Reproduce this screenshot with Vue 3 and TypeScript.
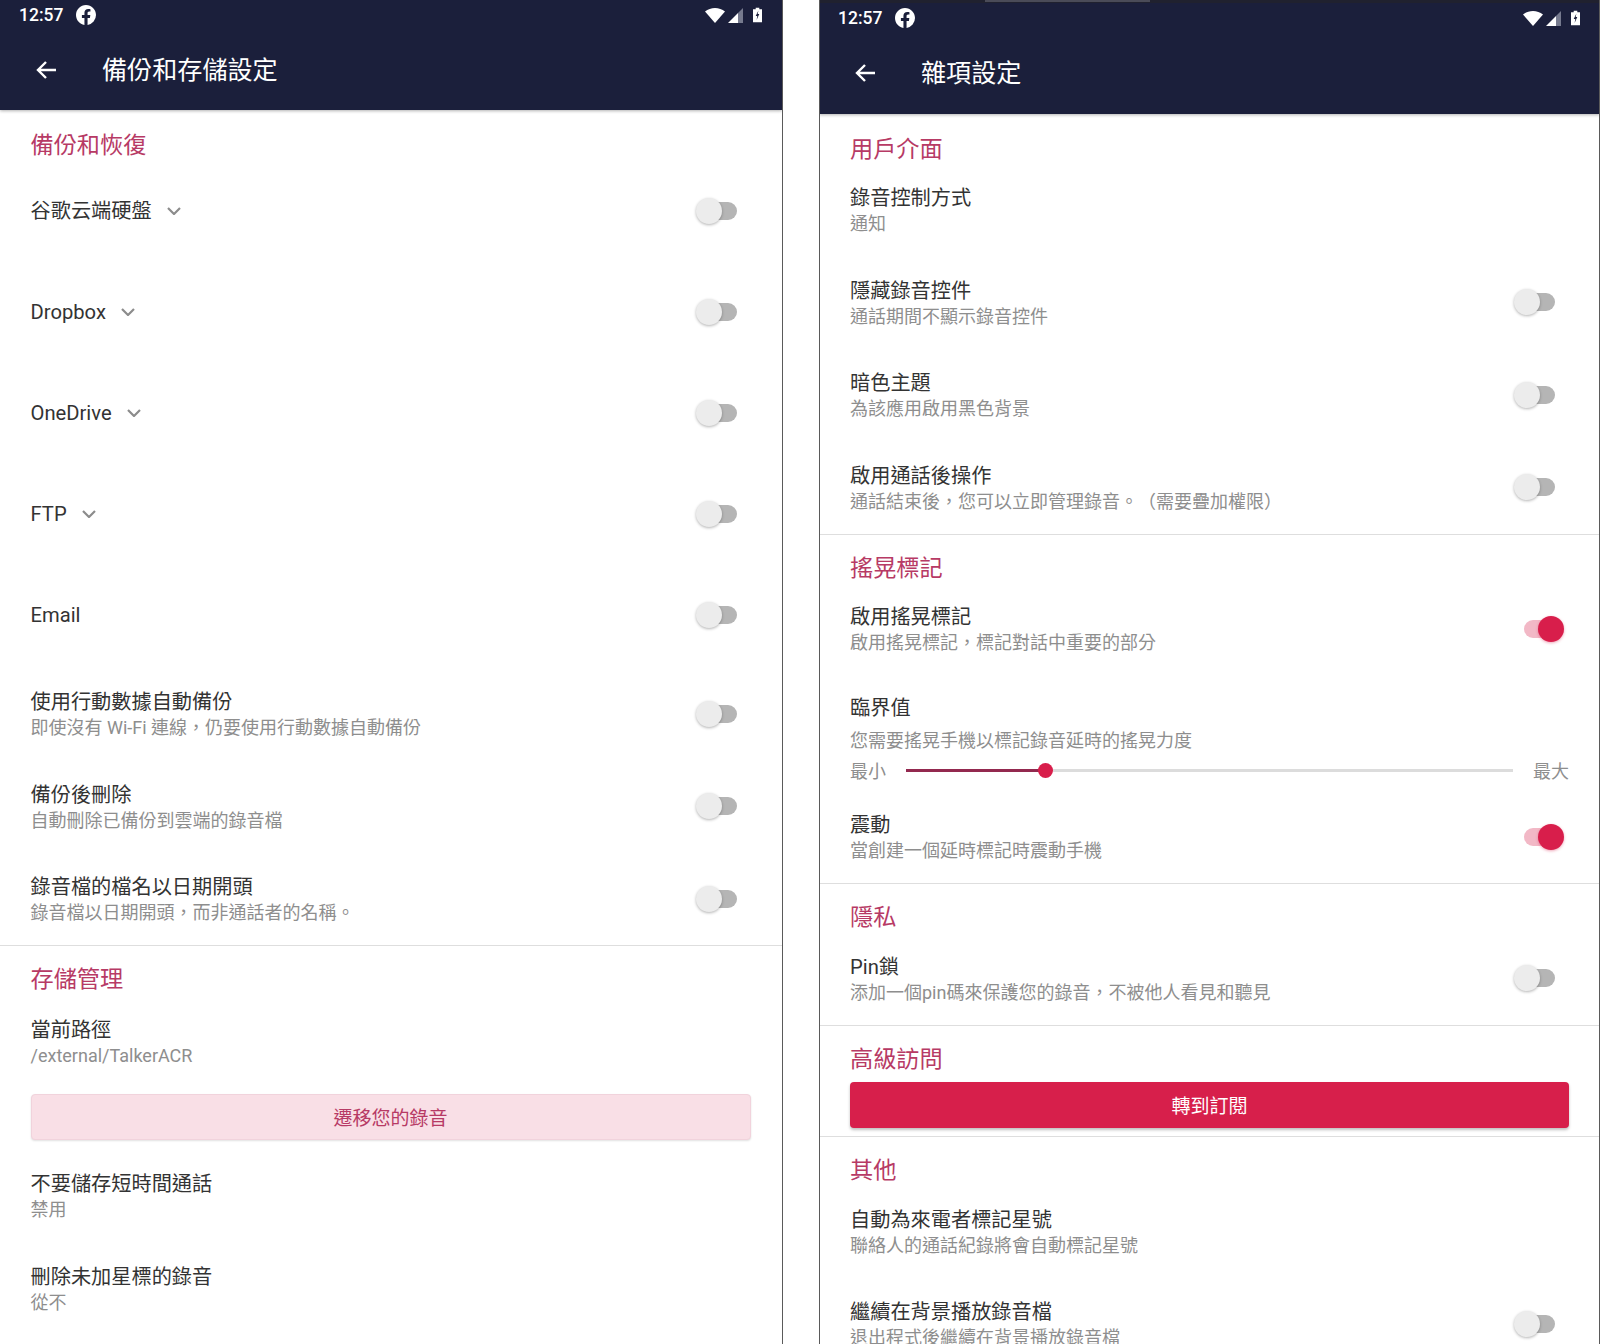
<script setup lang="ts">
interface Row {
  title: string
  sub?: string
  toggle?: boolean
  on?: boolean
  chevron?: boolean
  tall?: boolean
}

const backup: Row[] = [
  { title: '谷歌云端硬盤', toggle: true, chevron: true, tall: true },
  { title: 'Dropbox', toggle: true, chevron: true, tall: true },
  { title: 'OneDrive', toggle: true, chevron: true, tall: true },
  { title: 'FTP', toggle: true, chevron: true, tall: true },
  { title: 'Email', toggle: true, tall: true },
  { title: '使用行動數據自動備份', sub: '即使沒有 Wi-Fi 連線，仍要使用行動數據自動備份', toggle: true },
  { title: '備份後刪除', sub: '自動刪除已備份到雲端的錄音檔', toggle: true },
  { title: '錄音檔的檔名以日期開頭', sub: '錄音檔以日期開頭，而非通話者的名稱。', toggle: true },
]
const ui: Row[] = [
  { title: '錄音控制方式', sub: '通知' },
  { title: '隱藏錄音控件', sub: '通話期間不顯示錄音控件', toggle: true },
  { title: '暗色主題', sub: '為該應用啟用黑色背景', toggle: true },
  { title: '啟用通話後操作', sub: '通話結束後，您可以立即管理錄音。（需要疊加權限）', toggle: true },
]
const others: Row[] = [
  { title: '自動為來電者標記星號', sub: '聯絡人的通話紀錄將會自動標記星號' },
  { title: '繼續在背景播放錄音檔', sub: '退出程式後繼續在背景播放錄音檔', toggle: true },
]
const sliderValue = 23
</script>

<template>
  <div class="page">
    <!-- left screen -->
    <section class="screen screen-left">
      <header class="appbar">
        <div class="status">
          <div class="status-left">
            <span class="time">12:57</span>
            <svg class="fb" viewBox="2 2 20 20"><path fill="#fff" d="M12 2.04c-5.5 0-10 4.49-10 10.02 0 5 3.66 9.15 8.44 9.9v-7H7.9v-2.9h2.54V9.85c0-2.51 1.49-3.89 3.78-3.89 1.09 0 2.23.19 2.23.19v2.47h-1.26c-1.24 0-1.63.77-1.63 1.55v1.88h2.78l-.45 2.9h-2.33v7a10 10 0 0 0 8.44-9.9c0-5.53-4.5-10.02-10-10.02z"/></svg>
          </div>
          <div class="status-right">
            <svg class="wifi" viewBox="0 0 20 15"><path fill="#fff" d="M0 3.6C5.6-1.2 14.4-1.2 20 3.6L10 15z"/></svg>
            <svg class="signal" viewBox="0 0 15 15"><path fill="#fff" d="M10 5 0 15h10z"/><path fill="#767a8e" d="M15 0 10 5v10h5z"/></svg>
            <svg class="battery" viewBox="0 0 10 16"><path fill="#fff" d="M3 0h4v1.5h3V16H0V1.5h3z"/><path fill="#1b1f3b" d="M6 3 3 9h1.8L4 13.5 7 7H5.2z"/></svg>
          </div>
        </div>
        <div class="toolbar">
          <svg class="back" viewBox="0 0 20 20"><path fill="none" stroke="#fff" stroke-width="2.4" d="M20 10H2M10 2l-8 8 8 8"/></svg>
          <h1 class="bar-title">備份和存儲設定</h1>
        </div>
      </header>

      <div class="group">
        <h2 class="group-title">備份和恢復</h2>
        <div v-for="r in backup" :key="r.title" class="row" :class="{ tall: r.tall }">
          <div class="text">
            <div class="title">
              {{ r.title }}
              <svg v-if="r.chevron" class="chev" viewBox="0 0 14 8"><path fill="none" stroke="#8c8c8c" stroke-width="2.2" d="M1 1l6 6 6-6"/></svg>
            </div>
            <div v-if="r.sub" class="sub">{{ r.sub }}</div>
          </div>
          <div v-if="r.toggle" class="switch" :class="{ on: r.on }"><i class="track"></i><i class="thumb"></i></div>
        </div>
      </div>

      <div class="group group-last">
        <h2 class="group-title">存儲管理</h2>
        <div class="row">
          <div class="text">
            <div class="title">當前路徑</div>
            <div class="sub">/external/TalkerACR</div>
          </div>
        </div>
        <button class="btn btn-soft">遷移您的錄音</button>
        <div class="row">
          <div class="text">
            <div class="title">不要儲存短時間通話</div>
            <div class="sub">禁用</div>
          </div>
        </div>
        <div class="row">
          <div class="text">
            <div class="title">刪除未加星標的錄音</div>
            <div class="sub">從不</div>
          </div>
        </div>
      </div>
    </section>

    <!-- right screen -->
    <section class="screen screen-right">
      <header class="appbar">
        <div class="notch"><i></i></div>
        <div class="status">
          <div class="status-left">
            <span class="time">12:57</span>
            <svg class="fb" viewBox="2 2 20 20"><path fill="#fff" d="M12 2.04c-5.5 0-10 4.49-10 10.02 0 5 3.66 9.15 8.44 9.9v-7H7.9v-2.9h2.54V9.85c0-2.51 1.49-3.89 3.78-3.89 1.09 0 2.23.19 2.23.19v2.47h-1.26c-1.24 0-1.63.77-1.63 1.55v1.88h2.78l-.45 2.9h-2.33v7a10 10 0 0 0 8.44-9.9c0-5.53-4.5-10.02-10-10.02z"/></svg>
          </div>
          <div class="status-right">
            <svg class="wifi" viewBox="0 0 20 15"><path fill="#fff" d="M0 3.6C5.6-1.2 14.4-1.2 20 3.6L10 15z"/></svg>
            <svg class="signal" viewBox="0 0 15 15"><path fill="#fff" d="M10 5 0 15h10z"/><path fill="#767a8e" d="M15 0 10 5v10h5z"/></svg>
            <svg class="battery" viewBox="0 0 10 16"><path fill="#fff" d="M3 0h4v1.5h3V16H0V1.5h3z"/><path fill="#1b1f3b" d="M6 3 3 9h1.8L4 13.5 7 7H5.2z"/></svg>
          </div>
        </div>
        <div class="toolbar">
          <svg class="back" viewBox="0 0 20 20"><path fill="none" stroke="#fff" stroke-width="2.4" d="M20 10H2M10 2l-8 8 8 8"/></svg>
          <h1 class="bar-title">雜項設定</h1>
        </div>
      </header>

      <div class="group">
        <h2 class="group-title">用戶介面</h2>
        <div v-for="r in ui" :key="r.title" class="row">
          <div class="text">
            <div class="title">{{ r.title }}</div>
            <div class="sub">{{ r.sub }}</div>
          </div>
          <div v-if="r.toggle" class="switch"><i class="track"></i><i class="thumb"></i></div>
        </div>
      </div>

      <div class="group tight">
        <h2 class="group-title">搖晃標記</h2>
        <div class="row">
          <div class="text">
            <div class="title">啟用搖晃標記</div>
            <div class="sub">啟用搖晃標記，標記對話中重要的部分</div>
          </div>
          <div class="switch on"><i class="track"></i><i class="thumb"></i></div>
        </div>
        <div class="threshold">
          <div class="title">臨界值</div>
          <div class="sub sub-gap">您需要搖晃手機以標記錄音延時的搖晃力度</div>
          <div class="slider-row">
            <span class="sub">最小</span>
            <div class="slider">
              <i class="slider-fill" :style="{ width: sliderValue + '%' }"></i>
              <i class="slider-thumb" :style="{ left: sliderValue + '%' }"></i>
            </div>
            <span class="sub">最大</span>
          </div>
        </div>
        <div class="row">
          <div class="text">
            <div class="title">震動</div>
            <div class="sub">當創建一個延時標記時震動手機</div>
          </div>
          <div class="switch on"><i class="track"></i><i class="thumb"></i></div>
        </div>
      </div>

      <div class="group tight">
        <h2 class="group-title">隱私</h2>
        <div class="row">
          <div class="text">
            <div class="title">Pin鎖</div>
            <div class="sub">添加一個pin碼來保護您的錄音，不被他人看見和聽見</div>
          </div>
          <div class="switch"><i class="track"></i><i class="thumb"></i></div>
        </div>
      </div>

      <div class="group tight premium">
        <h2 class="group-title">高級訪問</h2>
        <button class="btn btn-solid">轉到訂閱</button>
      </div>

      <div class="group tight group-last">
        <h2 class="group-title">其他</h2>
        <div v-for="r in others" :key="r.title" class="row">
          <div class="text">
            <div class="title">{{ r.title }}</div>
            <div class="sub">{{ r.sub }}</div>
          </div>
          <div v-if="r.toggle" class="switch"><i class="track"></i><i class="thumb"></i></div>
        </div>
      </div>
    </section>
  </div>
</template>

<style>
html, body { margin: 0; background: #fff; }
</style>

<style scoped>
.page {
  width: 1600px;
  height: 1344px;
  overflow: hidden;
  display: flex;
  gap: 36px;
  background: #fff;
  font-family: Roboto, "Noto Sans CJK TC", sans-serif;
  text-spacing-trim: space-all;
}
.screen { height: 1344px; box-sizing: border-box; overflow: hidden; }
.screen-left { width: 783px; border-right: 1px solid #5a5a5a; }
.screen-right { width: 781px; border-left: 1px solid #5a5a5a; border-right: 1px solid #5a5a5a; }

.appbar { background: #1b1f3b; box-shadow: 0 1px 3px rgba(0, 0, 0, .3); position: relative; }
.screen-left .appbar { height: 110px; }
.screen-right .appbar { height: 113.5px; margin-left: -1px; margin-right: -1px; }
.notch { height: 3px; background: #20212f; display: flex; padding-left: 166px; }
.notch i { width: 165px; height: 2px; background: #4a4b58; }

.status { height: 30px; display: flex; justify-content: space-between; align-items: center; }
.status-left { display: flex; align-items: center; padding-left: 19px; }
.time { color: #fff; font-size: 17.5px; font-weight: 500; width: 44px; }
.fb { width: 20px; height: 20px; margin-left: 13px; }
.status-right { display: flex; align-items: center; padding-right: 20px; }
.wifi { width: 20px; height: 15px; }
.signal { width: 15px; height: 15px; margin-left: 3px; }
.battery { width: 9px; height: 16px; margin-left: 10px; }

.toolbar { height: 80px; display: flex; align-items: center; padding-left: 36px; }
.back { width: 20px; height: 20px; }
.bar-title { margin: 2px 0 0 46px; color: #fff; font-size: 25.1px; font-weight: 400; line-height: 32px; }

.group { border-bottom: 1px solid #dedede; padding-top: 20px; }
.group-last { border-bottom: 0; }
.tight { padding-top: 18px; }
.premium { padding-bottom: 8.5px; }
.screen-left .group-last { padding-top: 18px; }
.group-title {
  margin: 0 0 0 30px;
  height: 30px;
  line-height: 31px;
  font-size: 23.2px;
  font-weight: 400;
  color: #b73a65;
}
.screen-left .group-title { margin-left: 30.5px; }
.screen-left .group-last .group-title { margin-bottom: 1px; }

.row {
  height: 92.5px;
  display: flex;
  align-items: center;
  justify-content: space-between;
  padding: 0 34px 0 30px;
  box-sizing: border-box;
}
.screen-left .row { padding-left: 30.5px; }
.screen-right .row { padding-right: 33px; }
.row.tall { height: 101.2px; }
.row.tall + .row:not(.tall) { margin-top: 1.5px; }
.text { display: flex; flex-direction: column; margin-top: 3px; }
.row.tall .text { margin-top: 0; }
.title {
  display: flex;
  align-items: center;
  gap: 15px;
  font-size: 20.2px;
  line-height: 26px;
  color: #333;
}
.sub { font-size: 18px; line-height: 26px; color: #8e8e8e; }
.chev { width: 14px; height: 8px; }

.switch { position: relative; width: 52px; height: 26px; flex: none; }
.track {
  position: absolute;
  left: 10px;
  top: 4px;
  width: 31px;
  height: 18px;
  border-radius: 9px;
  background: #b5b5b5;
}
.thumb {
  position: absolute;
  left: 0;
  top: 0;
  width: 26px;
  height: 26px;
  border-radius: 50%;
  background: #ececec;
  box-shadow: 0 1px 3px rgba(0, 0, 0, .3);
}
.switch.on .track { background: #f2b8c6; }
.switch.on .thumb { left: 24px; background: #d81e4b; box-shadow: 0 1px 3px rgba(216, 30, 75, .4); }

.btn {
  display: block;
  height: 46px;
  border: 0;
  border-radius: 4px;
  font-family: inherit;
  font-size: 19px;
  padding: 0;
  box-sizing: border-box;
}
.btn-soft {
  width: 720px;
  margin: 6.5px 0 9.5px 30.5px;
  background: #f9dfe6;
  color: #b73a65;
  border: 1px solid #f1d3dc;
  box-shadow: 0 1px 2px rgba(0, 0, 0, .12);
}
.btn-solid {
  width: 719px;
  margin: 8px 0 0 30px;
  background: #d71f4b;
  color: #fff;
  box-shadow: 0 2px 3px rgba(0, 0, 0, .25);
}

.threshold { height: 115.5px; box-sizing: border-box; padding: 20px 30px 0; }
.sub-gap { margin-top: 7px; }
.slider-row { display: flex; align-items: center; gap: 20px; margin-top: 5px; }
.slider { position: relative; flex: 1; height: 3px; margin-top: -3px; background: #dcdcdc; }
.slider-fill { position: absolute; left: 0; top: 0; height: 3px; background: #93294f; }
.slider-thumb {
  position: absolute;
  top: -6px;
  width: 15px;
  height: 15px;
  margin-left: -7.5px;
  border-radius: 50%;
  background: #d81e4b;
}
</style>
